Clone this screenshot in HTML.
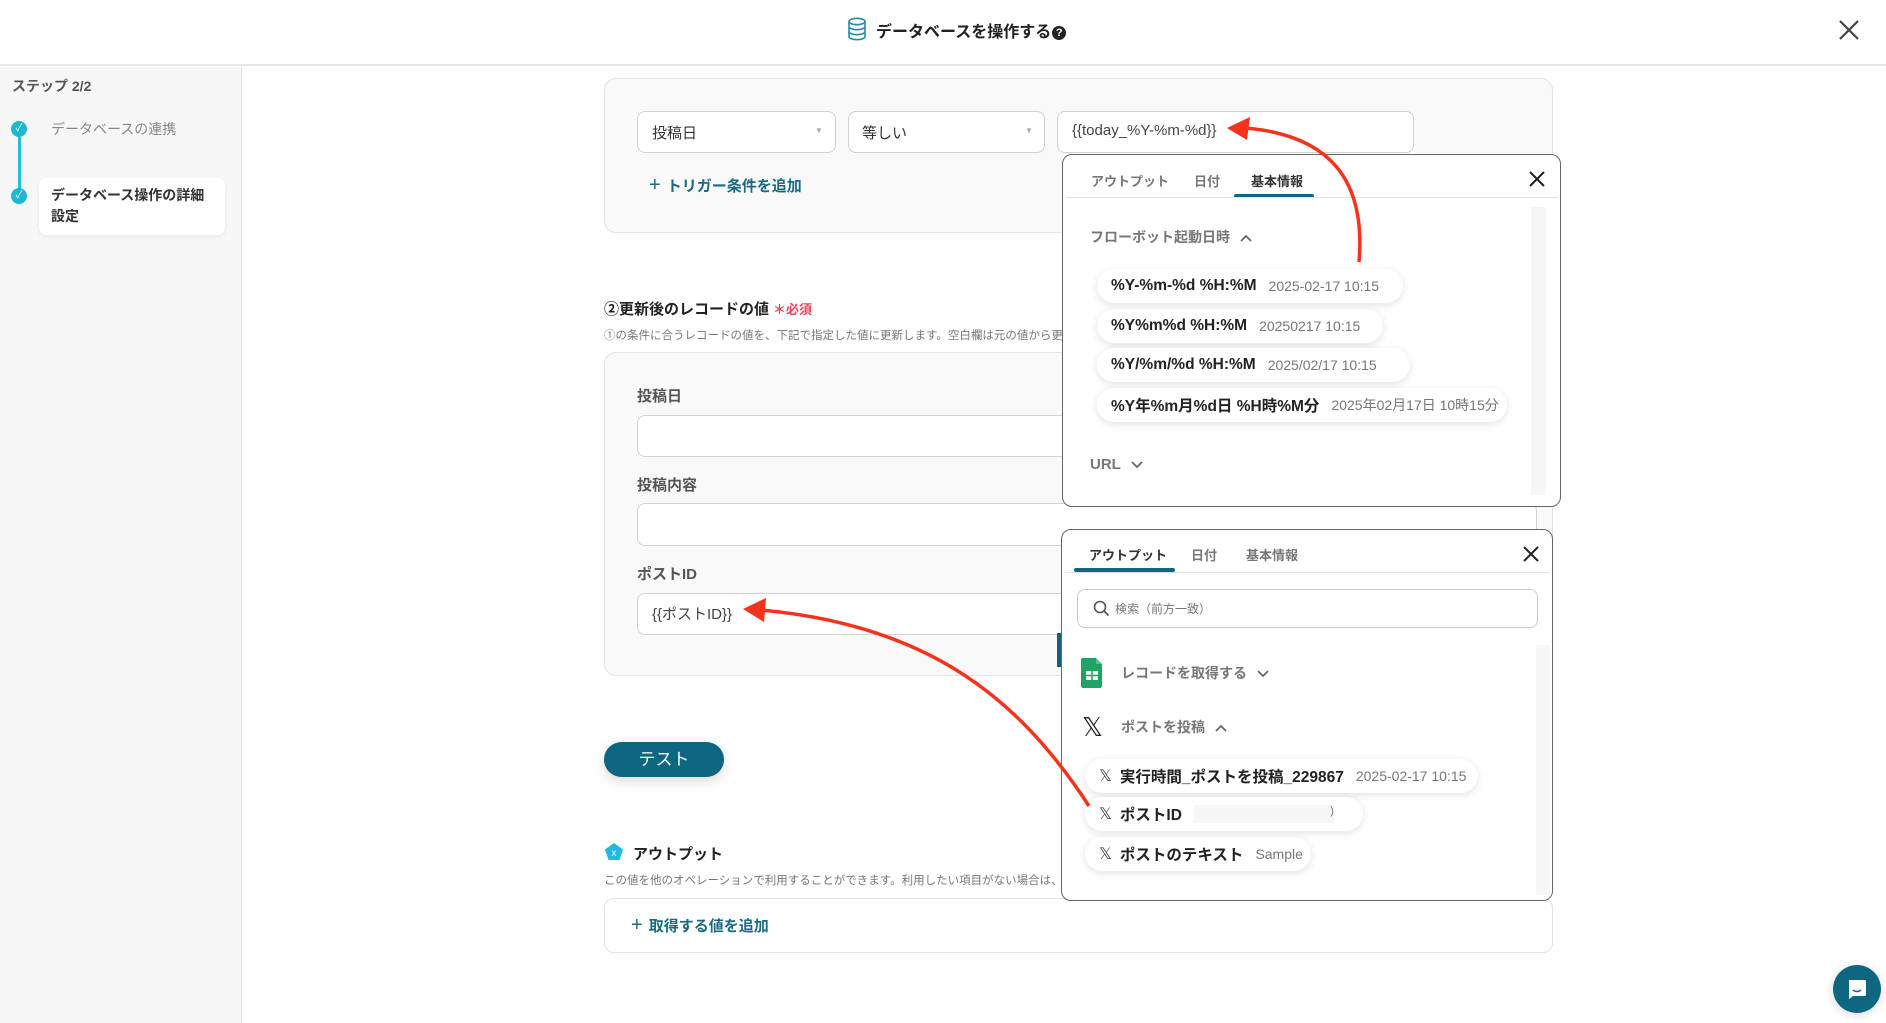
<!DOCTYPE html>
<html><head><meta charset="utf-8"><style>
*{box-sizing:border-box;margin:0;padding:0}
body{width:1886px;height:1023px;overflow:hidden;background:#fff;font-family:"Liberation Sans","Noto Sans CJK JP",sans-serif;color:#333;position:relative}
.a{position:absolute}
.hdr{left:0;top:0;width:1886px;height:66px;border-bottom:2px solid #e6e6e6;background:#fff}
.side{left:0;top:67px;width:242px;height:956px;background:#f7f7f7;border-right:1px solid #e3e3e3}
.card{background:#f9f9f9;border:1px solid #e3e3e3;border-radius:12px}
.inp{background:#fff;border:1px solid #d2d2d2;border-radius:8px}
.lbl{font-size:15px;font-weight:bold;color:#555}
.pop{background:#fff;border:1.5px solid #666;border-radius:10px}
.tab{font-size:13px;font-weight:bold;color:#777;position:absolute}
.chip{position:absolute;background:#fff;border-radius:18px;box-shadow:0 2px 8px rgba(0,0,0,.12);font-size:15.5px;font-weight:bold;color:#222;display:flex;align-items:center;padding-left:14px;white-space:nowrap}
.chip span{font-weight:normal;color:#777;font-size:14px;margin-left:12px}
.x{font-size:16px;color:#444;font-weight:normal;margin-right:8px}
.chev{display:inline-block;vertical-align:middle;margin-left:10px}
</style></head><body>
<div class="a hdr"></div>
<svg class="a" style="left:847px;top:17px" width="20" height="24" viewBox="0 0 20 24"><g fill="none" stroke="#2a8aa6" stroke-width="1.6"><ellipse cx="10" cy="4.5" rx="8" ry="3.2"/><path d="M2 4.5v15c0 1.8 3.6 3.2 8 3.2s8-1.4 8-3.2v-15M2 9.5c0 1.8 3.6 3.2 8 3.2s8-1.4 8-3.2M2 14.5c0 1.8 3.6 3.2 8 3.2s8-1.4 8-3.2"/></g></svg>
<div class="a" style="left:876px;top:18px;font-size:16px;font-weight:bold;color:#222;white-space:nowrap">データベースを操作する<span style="display:inline-block;width:14px;height:14px;border-radius:50%;background:#222;color:#fff;font-size:11px;text-align:center;line-height:14px;vertical-align:1px;margin-left:1px">?</span></div>
<svg class="a" style="left:1838px;top:19px" width="22" height="22"><path d="M2 2L20 20M20 2L2 20" stroke="#444" stroke-width="2.2"/></svg>

<div class="a side"></div>
<div class="a" style="left:12px;top:76px;font-size:14px;font-weight:bold;color:#555">ステップ 2/2</div>
<div class="a" style="left:18px;top:135px;width:3px;height:60px;background:#22c0d5"></div>
<div class="a" style="left:11px;top:121px;width:16px;height:16px;border-radius:50%;background:#1cbad2;color:#fff;font-size:10px;text-align:center;line-height:16px">✓</div>
<div class="a" style="left:51px;top:119px;font-size:14px;color:#888">データベースの連携</div>
<div class="a" style="left:39px;top:178px;width:186px;height:57px;background:#fff;border-radius:8px;box-shadow:0 2px 6px rgba(0,0,0,.06)"></div>
<div class="a" style="left:11px;top:188px;width:16px;height:16px;border-radius:50%;background:#1cbad2;color:#fff;font-size:10px;text-align:center;line-height:16px">✓</div>
<div class="a" style="left:51px;top:185px;font-size:14px;font-weight:bold;color:#333;line-height:21px;width:170px">データベース操作の詳細<br>設定</div>

<div class="a card" style="left:604px;top:78px;width:949px;height:155px"></div>
<div class="a inp" style="left:637px;top:111px;width:199px;height:42px"></div>
<div class="a" style="left:652px;top:122px;font-size:15px;color:#333">投稿日</div>
<div class="a" style="left:815px;top:126px;font-size:8px;color:#aaa">▼</div>
<div class="a inp" style="left:848px;top:111px;width:197px;height:42px"></div>
<div class="a" style="left:862px;top:122px;font-size:15px;color:#333">等しい</div>
<div class="a" style="left:1025px;top:126px;font-size:8px;color:#aaa">▼</div>
<div class="a inp" style="left:1057px;top:111px;width:357px;height:42px"></div>
<div class="a" style="left:1072px;top:122px;font-size:15px;color:#444">{{today_%Y-%m-%d}}</div>
<div class="a" style="left:649px;top:174px;font-size:15px;font-weight:bold;color:#1b6a82"><span style="font-size:20px;font-weight:normal;margin-right:6px">+</span>トリガー条件を追加</div>

<div class="a" style="left:604px;top:298px;font-size:15px;font-weight:bold;color:#222">②更新後のレコードの値<span style="color:#e8435a;font-size:13px;margin-left:4px">＊必須</span></div>
<div class="a" style="left:604px;top:327px;font-size:11.5px;color:#777;white-space:nowrap">①の条件に合うレコードの値を、下記で指定した値に更新します。空白欄は元の値から更新さ</div>
<div class="a card" style="left:604px;top:352px;width:949px;height:324px"></div>
<div class="a lbl" style="left:637px;top:385px">投稿日</div>
<div class="a inp" style="left:637px;top:415px;width:900px;height:42px"></div>
<div class="a lbl" style="left:637px;top:474px">投稿内容</div>
<div class="a inp" style="left:637px;top:503px;width:900px;height:43px"></div>
<div class="a lbl" style="left:637px;top:563px">ポストID</div>
<div class="a inp" style="left:637px;top:593px;width:900px;height:42px"></div>
<div class="a" style="left:652px;top:603px;font-size:15px;color:#444">{{ポストID}}</div>
<div class="a" style="left:1057px;top:633px;width:8px;height:34px;background:#15607a"></div>

<div class="a" style="left:604px;top:742px;width:120px;height:35px;border-radius:18px;background:#0f6680;color:#fff;font-size:17px;text-align:center;line-height:35px;box-shadow:0 4px 12px rgba(0,0,0,.15)">テスト</div>

<svg class="a" style="left:604px;top:842px" width="20" height="20"><path d="M10 1L19 7.5L15.5 18H4.5L1 7.5Z" fill="#23b7e5"/><text x="10" y="14" font-size="10" fill="#fff" text-anchor="middle" font-family="Liberation Sans">x</text></svg>
<div class="a" style="left:633px;top:843px;font-size:15px;font-weight:bold;color:#222">アウトプット</div>
<div class="a" style="left:604px;top:872px;font-size:11.5px;color:#777;white-space:nowrap">この値を他のオペレーションで利用することができます。利用したい項目がない場合は、「＋</div>
<div class="a" style="left:604px;top:898px;width:949px;height:55px;border:1px solid #e3e3e3;border-radius:10px;background:#fff"></div>
<div class="a" style="left:631px;top:914px;font-size:15px;font-weight:bold;color:#1b6a82"><span style="font-size:20px;font-weight:normal;margin-right:6px">+</span>取得する値を追加</div>

<!-- popup 1 -->
<div class="a pop" style="left:1062px;top:154px;width:499px;height:353px"></div>
<div class="tab" style="left:1091px;top:171px">アウトプット</div>
<div class="tab" style="left:1194px;top:171px">日付</div>
<div class="tab" style="left:1251px;top:171px;color:#333">基本情報</div>
<div class="a" style="left:1234px;top:194px;width:80px;height:4px;background:#0f6680;border-radius:2px"></div>
<div class="a" style="left:1066px;top:197px;width:492px;height:1px;background:#e3e3e3"></div>
<svg class="a" style="left:1529px;top:171px" width="16" height="16"><path d="M1 1L15 15M15 1L1 15" stroke="#222" stroke-width="2"/></svg>
<div class="a" style="left:1531px;top:207px;width:15px;height:288px;background:#f6f6f6"></div>
<div class="a" style="left:1090px;top:227px;font-size:14px;font-weight:bold;color:#777">フローボット起動日時<svg class="chev" width="12" height="8"><path d="M1 7L6 2L11 7" stroke="#666" stroke-width="1.8" fill="none"/></svg></div>
<div class="chip" style="left:1097px;top:269px;width:306px;height:34px">%Y-%m-%d %H:%M<span>2025-02-17 10:15</span></div>
<div class="chip" style="left:1097px;top:309px;width:286px;height:34px">%Y%m%d %H:%M<span>20250217 10:15</span></div>
<div class="chip" style="left:1097px;top:348px;width:313px;height:34px">%Y/%m/%d %H:%M<span>2025/02/17 10:15</span></div>
<div class="chip" style="left:1097px;top:388px;width:410px;height:34px">%Y年%m月%d日 %H時%M分<span>2025年02月17日 10時15分</span></div>
<div class="a" style="left:1090px;top:456px;font-size:15px;font-weight:bold;color:#777">URL<svg class="chev" width="12" height="8"><path d="M1 1L6 6L11 1" stroke="#666" stroke-width="1.8" fill="none"/></svg></div>

<!-- popup 2 -->
<div class="a pop" style="left:1061px;top:529px;width:492px;height:372px"></div>
<div class="tab" style="left:1089px;top:545px;color:#333">アウトプット</div>
<div class="tab" style="left:1191px;top:545px">日付</div>
<div class="tab" style="left:1246px;top:545px">基本情報</div>
<div class="a" style="left:1074px;top:568px;width:101px;height:4px;background:#0f6680;border-radius:2px"></div>
<div class="a" style="left:1065px;top:572px;width:485px;height:1px;background:#e3e3e3"></div>
<svg class="a" style="left:1523px;top:546px" width="16" height="16"><path d="M1 1L15 15M15 1L1 15" stroke="#222" stroke-width="2"/></svg>
<div class="a" style="left:1077px;top:589px;width:461px;height:39px;border:1px solid #ccc;border-radius:8px"></div>
<svg class="a" style="left:1093px;top:600px" width="17" height="17"><circle cx="7" cy="7" r="5.5" fill="none" stroke="#555" stroke-width="1.6"/><path d="M11 11L15.5 15.5" stroke="#555" stroke-width="1.8"/></svg>
<div class="a" style="left:1115px;top:600px;font-size:12px;color:#777">検索（前方一致）</div>
<div class="a" style="left:1536px;top:645px;width:14px;height:250px;background:#f6f6f6"></div>
<svg class="a" style="left:1081px;top:658px" width="22" height="30"><path d="M2 0H15L21 6V28C21 29 20 30 19 30H2C1 30 0 29 0 28V2C0 1 1 0 2 0Z" fill="#1fa463"/><path d="M15 0V6H21Z" fill="#64c08a"/><rect x="5" y="13" width="12" height="9" fill="#fff"/><path d="M5 17.5H17M11 13V22" stroke="#1fa463" stroke-width="1.5"/></svg>
<div class="a" style="left:1121px;top:663px;font-size:14px;font-weight:bold;color:#777">レコードを取得する<svg class="chev" width="12" height="8"><path d="M1 1L6 6L11 1" stroke="#666" stroke-width="1.8" fill="none"/></svg></div>
<div class="a" style="left:1082px;top:712px;font-size:26px;color:#222;line-height:30px">𝕏</div>
<div class="a" style="left:1121px;top:717px;font-size:14px;font-weight:bold;color:#777">ポストを投稿<svg class="chev" width="12" height="8"><path d="M1 7L6 2L11 7" stroke="#666" stroke-width="1.8" fill="none"/></svg></div>
<div class="chip" style="left:1085px;top:759px;width:393px;height:34px"><b class="x">𝕏</b>実行時間_ポストを投稿_229867<span>2025-02-17 10:15</span></div>
<div class="chip" style="left:1085px;top:797px;width:278px;height:34px"><b class="x">𝕏</b>ポストID<span style="display:inline-block;width:140px;height:18px;background:#f6f6f6;text-align:right;font-size:11px">)</span></div>
<div class="chip" style="left:1085px;top:837px;width:226px;height:34px"><b class="x">𝕏</b>ポストのテキスト<span>Sample</span></div>

<!-- arrows -->
<svg class="a" style="left:0;top:0" width="1886" height="1023">
<path d="M1359 262C1366 180 1330 135 1245 128" fill="none" stroke="#f5331c" stroke-width="3.5"/>
<path d="M1227 128L1250 117L1247 140Z" fill="#f5331c"/>
<path d="M1089 806C1020 700 930 625 760 610" fill="none" stroke="#f5331c" stroke-width="3.5"/>
<path d="M743 609L766 598L764 622Z" fill="#f5331c"/>
</svg>

<div class="a" style="left:1833px;top:965px;width:48px;height:48px;border-radius:50%;background:#0f6680;box-shadow:0 2px 10px rgba(0,0,0,.15)"></div>
<svg class="a" style="left:1845px;top:977px" width="24" height="24"><path d="M4 3H20C21 3 21 4 21 5V18C21 19 20 19 19 19H8L4 22Z" fill="#fff"/><path d="M8 13C10 15 14 15 16 13" stroke="#0f6680" stroke-width="1.5" fill="none"/></svg>
</body></html>
